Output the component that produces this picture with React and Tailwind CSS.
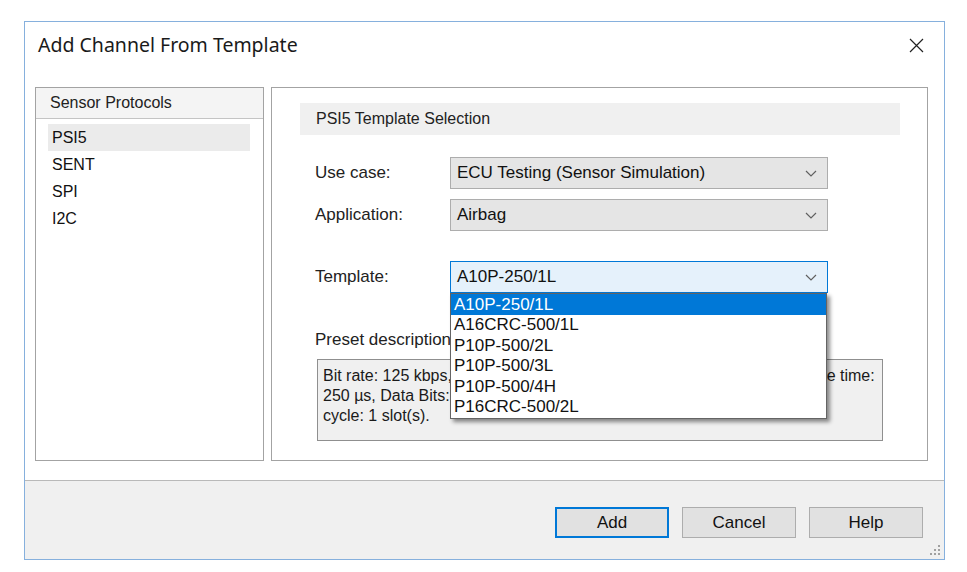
import React from 'react';

const sans = { fontFamily: '"Liberation Sans", Arial, sans-serif' };

const Chevron = () => (
  <svg width="12" height="7" viewBox="0 0 12 7" className="shrink-0">
    <path d="M1 1 L6 6 L11 1" fill="none" stroke="#606060" strokeWidth="1.2" />
  </svg>
);

const Combo = ({ value, active }) => (
  <div
    className={`w-[378px] h-[32px] flex items-center justify-between pl-[6px] pr-[10px] border ${
      active ? 'bg-[#e5f1fb] border-[#0078d7]' : 'bg-[#e5e5e5] border-[#adadad]'
    }`}
  >
    <span className="text-[17px] text-[#111]">{value}</span>
    <Chevron />
  </div>
);

const templates = ['A10P-250/1L', 'A16CRC-500/1L', 'P10P-500/2L', 'P10P-500/3L', 'P10P-500/4H', 'P16CRC-500/2L'];
const protocols = ['PSI5', 'SENT', 'SPI', 'I2C'];

export default function App() {
  return (
    <div className="w-[967px] h-[572px] bg-white pt-[21px] pl-[24px]" style={sans}>
      <div className="w-[921px] h-[539px] border border-[#86b0dd] bg-white flex flex-col">
        {/* title bar */}
        <div className="h-[46px] flex items-center justify-between pl-[13px] pr-[20px] shrink-0">
          <span className="text-[19.5px] text-[#1a1a1a]" style={{ fontFamily: '"Noto Sans", "Open Sans", sans-serif' }}>
            Add Channel From Template
          </span>
          <svg width="15" height="15" viewBox="0 0 15 15">
            <path d="M1 1 L14 14 M14 1 L1 14" stroke="#222" strokeWidth="1.2" />
          </svg>
        </div>

        {/* body */}
        <div className="h-[412px] flex gap-[7px] pt-[19px] pl-[10px] shrink-0">
          {/* left list */}
          <div className="w-[229px] h-[374px] border border-[#a3a3a3] flex flex-col">
            <div className="h-[31px] bg-[#f4f4f4] border-b border-[#c4c4c4] flex items-center pl-[14px] text-[16px] text-[#222]">
              Sensor Protocols
            </div>
            <div className="pt-[5px] pl-[12px] pr-[13px]">
              {protocols.map((p, i) => (
                <div
                  key={p}
                  className={`h-[27px] flex items-center pl-[4px] text-[16px] text-[#111] ${i === 0 ? 'bg-[#ebebeb]' : ''}`}
                >
                  {p}
                </div>
              ))}
            </div>
          </div>

          {/* right panel */}
          <div className="w-[657px] h-[374px] border border-[#a3a3a3] pt-[15px] pl-[28px]">
            <div className="w-[600px] h-[32px] bg-[#f0f0f0] flex items-center pl-[16px] text-[16px] text-[#222]">
              PSI5 Template Selection
            </div>

            <div className="pl-[15px]">
              <div className="flex items-center mt-[22px]">
                <span className="w-[135px] text-[17px] text-[#222]">Use case:</span>
                <Combo value="ECU Testing (Sensor Simulation)" />
              </div>
              <div className="flex items-center mt-[10px]">
                <span className="w-[135px] text-[17px] text-[#222]">Application:</span>
                <Combo value="Airbag" />
              </div>
              <div className="flex items-center mt-[30px] relative z-10">
                <span className="w-[135px] text-[17px] text-[#222]">Template:</span>
                <div className="relative">
                  <Combo value="A10P-250/1L" active />
                  {/* open dropdown list */}
                  <div className="absolute left-0 top-full w-[377px] pb-[1px] bg-white border border-[#646464] shadow-[3px_3px_4px_rgba(0,0,0,0.45)]">
                    {templates.map((t, i) => (
                      <div
                        key={t}
                        className={`h-[20.5px] flex items-center pl-[3px] text-[17px] ${
                          i === 0 ? 'bg-[#0078d7] text-white' : 'text-[#111]'
                        }`}
                      >
                        {t}
                      </div>
                    ))}
                  </div>
                </div>
              </div>

              <div className="mt-[37px] text-[17px] text-[#222] leading-[20px]">Preset description:</div>
              <div className="mt-[9px] ml-[2px] w-[566px] h-[82px] bg-[#f0f0f0] border border-[#8f8f8f] pt-[6px] pl-[5px] pr-[10px] overflow-hidden">
                <div className="text-[16px] leading-[20px] text-[#1a1a1a] whitespace-nowrap">
                  Bit rate: 125 kbps, Sync pulse width: 10 µs, Sensor data frame slot cycle time:
                </div>
                <div className="text-[16px] leading-[20px] text-[#1a1a1a] whitespace-nowrap">
                  250 µs, Data Bits: 10, Error detection: Parity, Number of the slots per-
                </div>
                <div className="text-[16px] leading-[20px] text-[#1a1a1a] whitespace-nowrap">cycle: 1 slot(s).</div>
              </div>
            </div>
          </div>
        </div>

        {/* footer */}
        <div className="flex-1 bg-[#f0f0f0] border-t border-[#b9b9b9] relative flex justify-end items-start pt-[26px] pr-[21px] gap-[13px]">
          <button className="w-[114px] h-[31px] bg-[#e1e1e1] border-2 border-[#0078d7] text-[17px] text-[#111]">
            Add
          </button>
          <button className="w-[114px] h-[31px] bg-[#e1e1e1] border border-[#adadad] text-[17px] text-[#111]">
            Cancel
          </button>
          <button className="w-[114px] h-[31px] bg-[#e1e1e1] border border-[#adadad] text-[17px] text-[#111]">
            Help
          </button>
          <svg className="absolute right-[4px] bottom-[4px]" width="10" height="10" viewBox="0 0 10 10">
            <g fill="#a0a0a0">
              <rect x="8" y="0" width="2" height="2" />
              <rect x="4" y="4" width="2" height="2" />
              <rect x="8" y="4" width="2" height="2" />
              <rect x="0" y="8" width="2" height="2" />
              <rect x="4" y="8" width="2" height="2" />
              <rect x="8" y="8" width="2" height="2" />
            </g>
          </svg>
        </div>
      </div>
    </div>
  );
}
